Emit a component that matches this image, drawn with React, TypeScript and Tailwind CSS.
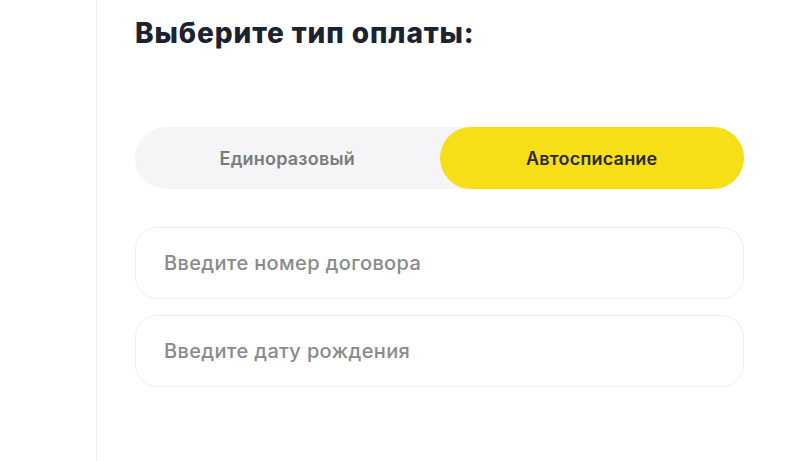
import { useState } from "react";

export default function App() {
  const [mode, setMode] = useState<"once" | "auto">("auto");

  return (
    <div className="min-h-[461px] w-[800px] bg-white flex" style={{ fontFamily: "Inter, 'Noto Sans', sans-serif" }}>
      <div className="w-[97px] shrink-0 border-r border-[#f1f1f3]" />
      <main className="flex-1 pl-[38px] pr-[56px] pt-[15px]">
        <h1 className="text-[28px] leading-[36px] font-extrabold text-[#1b2230] tracking-[0.9px]">
          Выберите тип оплаты:
        </h1>

        <div className="mt-[76px] flex h-[62px] rounded-full bg-[#f5f5f7]">
          <button
            onClick={() => setMode("once")}
            className={`flex-1 rounded-full text-[18px] font-semibold tracking-[0.2px] ${
              mode === "once" ? "bg-[#f6df16] text-[#2a2a2a]" : "text-[#7b7b7b]"
            }`}
          >
            Единоразовый
          </button>
          <button
            onClick={() => setMode("auto")}
            className={`flex-1 rounded-full text-[18px] font-semibold tracking-[0.2px] ${
              mode === "auto" ? "bg-[#f6df16] text-[#2a2a2a]" : "text-[#7b7b7b]"
            }`}
          >
            Автосписание
          </button>
        </div>

        <div className="mt-[38px] flex flex-col gap-[16px]">
          <input
            placeholder="Введите номер договора"
            className="h-[72px] rounded-[22px] border border-[#efefef] px-[28px] text-[20px] font-medium tracking-[0.35px] text-[#2a2a2a] placeholder:text-[#8a8a8a] outline-none"
          />
          <input
            placeholder="Введите дату рождения"
            className="h-[72px] rounded-[22px] border border-[#efefef] px-[28px] text-[20px] font-medium tracking-[0.35px] text-[#2a2a2a] placeholder:text-[#8a8a8a] outline-none"
          />
        </div>
      </main>
    </div>
  );
}
